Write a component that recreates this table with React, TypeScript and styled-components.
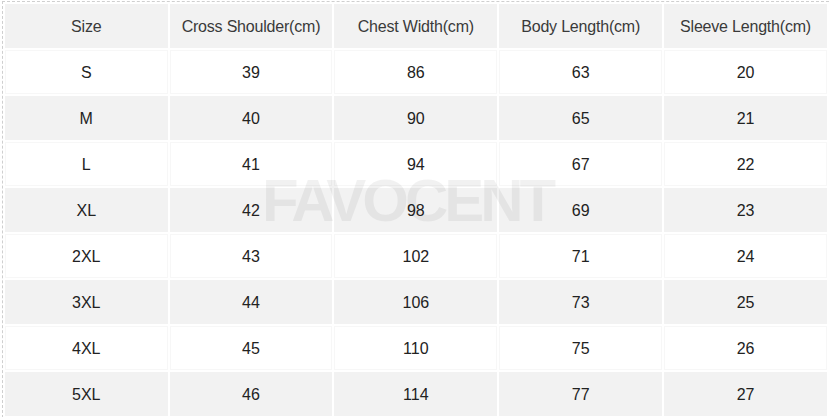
import styled, { createGlobalStyle } from "styled-components";

const GlobalStyle = createGlobalStyle`
  html, body {
    margin: 0;
    padding: 0;
    background: #ffffff;
    overflow: hidden;
  }
  body {
    font-family: "Liberation Sans", Arial, sans-serif;
  }
`;

const Page = styled.div`
  position: relative;
  width: 829px;
  height: 417px;
  padding: 1px 0 0 2px;
  box-sizing: border-box;
`;

const SizeTable = styled.table`
  border-collapse: separate;
  border-spacing: 2px;
  border-top: 1px dashed #cfcfcf;
  border-left: 1px dashed #cfcfcf;
  table-layout: fixed;
`;

const HeadCell = styled.th`
  width: 163px;
  height: 42px;
  padding: 2px 0 0;
  background: #f2f2f2;
  color: #3a3a3a;
  font-size: 16px;
  font-weight: normal;
  letter-spacing: -0.2px;
  text-align: center;
  vertical-align: middle;
  white-space: nowrap;
`;

const Cell = styled.td<{ $shade: boolean }>`
  height: 42px;
  padding: 2px 0 0;
  background: ${({ $shade }) => ($shade ? "#f2f2f2" : "#ffffff")};
  box-shadow: ${({ $shade }) => ($shade ? "none" : "inset 0 0 0 1px #f7f7f7")};
  color: #222222;
  font-size: 16px;
  text-align: center;
  vertical-align: middle;
`;

const Watermark = styled.div`
  position: absolute;
  left: 262px;
  top: 171px;
  font-family: "Liberation Sans", Arial, sans-serif;
  font-weight: bold;
  font-size: 60px;
  letter-spacing: -4px;
  line-height: 60px;
  color: rgba(0, 0, 0, 0.055);
  pointer-events: none;
  white-space: nowrap;
`;

const headers = [
  "Size",
  "Cross Shoulder(cm)",
  "Chest Width(cm)",
  "Body Length(cm)",
  "Sleeve Length(cm)",
];

const rows: string[][] = [
  ["S", "39", "86", "63", "20"],
  ["M", "40", "90", "65", "21"],
  ["L", "41", "94", "67", "22"],
  ["XL", "42", "98", "69", "23"],
  ["2XL", "43", "102", "71", "24"],
  ["3XL", "44", "106", "73", "25"],
  ["4XL", "45", "110", "75", "26"],
  ["5XL", "46", "114", "77", "27"],
];

export default function App() {
  return (
    <>
      <GlobalStyle />
      <Page>
        <SizeTable>
          <thead>
            <tr>
              {headers.map((h) => (
                <HeadCell key={h}>{h}</HeadCell>
              ))}
            </tr>
          </thead>
          <tbody>
            {rows.map((row, i) => (
              <tr key={row[0]}>
                {row.map((v, j) => (
                  <Cell key={j} $shade={i % 2 === 1}>
                    {v}
                  </Cell>
                ))}
              </tr>
            ))}
          </tbody>
        </SizeTable>
        <Watermark>FAVOCENT</Watermark>
      </Page>
    </>
  );
}
